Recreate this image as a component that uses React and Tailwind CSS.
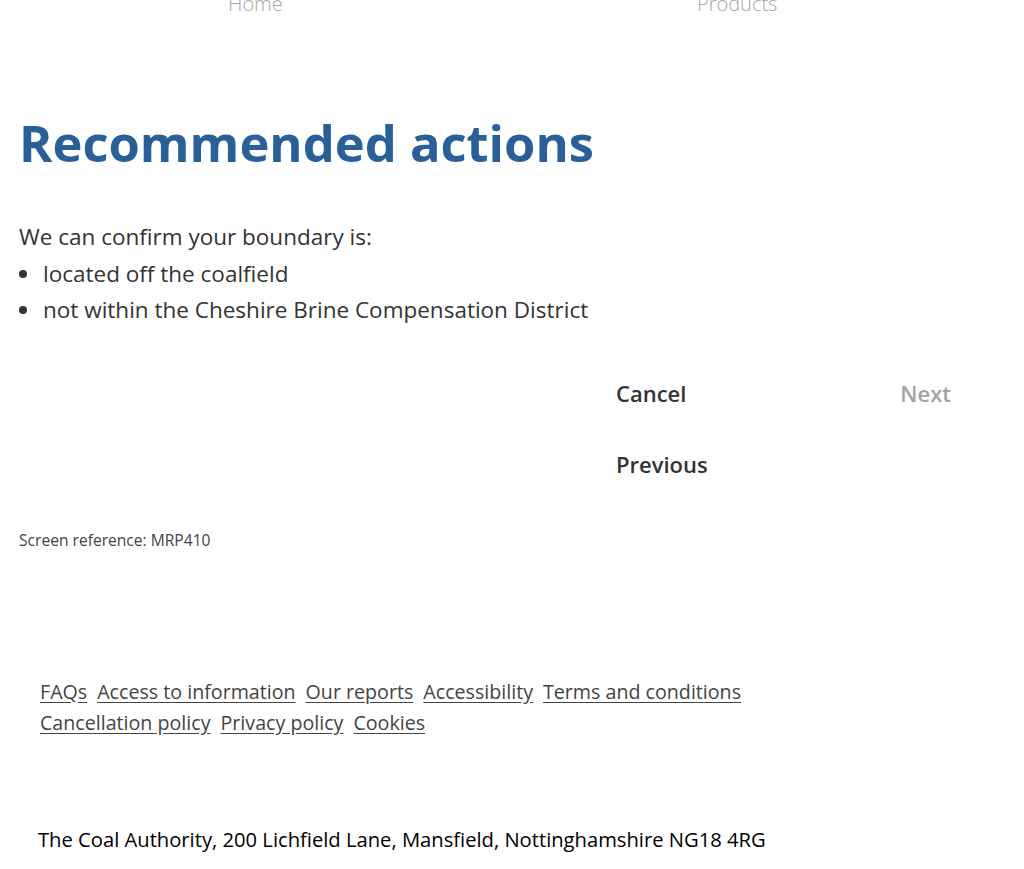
import React from 'react';

const footerLinks = [
  ['FAQs', 'Access to information', 'Our reports', 'Accessibility', 'Terms and conditions'],
  ['Cancellation policy', 'Privacy policy', 'Cookies'],
];

const boundaryPoints = ['located off the coalfield', 'not within the Cheshire Brine Compensation District'];

export default function App() {
  return (
    <div className="min-h-screen bg-white font-['Open_Sans',sans-serif] text-[#333] overflow-hidden">
      <nav className="h-[14px] relative">
        <a href="#" className="absolute left-[228px] top-[-10px] text-[20px] leading-[28px] font-light text-[#a6a6a6]">Home</a>
        <a href="#" className="absolute left-[697px] top-[-10px] text-[20px] leading-[28px] font-light text-[#a6a6a6]">Products</a>
      </nav>

      <main className="px-[19px]">
        <h1 className="mt-[99px] text-[50.7px] leading-[60px] font-bold text-[#2b5f97]">Recommended actions</h1>

        <div className="mt-[46px] text-[22.5px] leading-[36.5px]">
          <p>We can confirm your boundary is:</p>
          <ul>
            {boundaryPoints.map((point) => (
              <li key={point} className="flex items-center">
                <span className="w-[8px] h-[8px] ml-[0px] mr-[16px] rounded-full bg-[#333] shrink-0"></span>
                {point}
              </li>
            ))}
          </ul>
        </div>

        <div className="mt-[50px] ml-[597px] w-[335px]">
          <div className="flex justify-between items-center h-[30px]">
            <button className="text-[22px] font-semibold text-[#333]">Cancel</button>
            <button className="text-[22px] font-semibold text-[#a3a3a3]">Next</button>
          </div>
          <div className="mt-[41px] h-[30px] flex items-center">
            <button className="text-[22px] font-semibold text-[#333]">Previous</button>
          </div>
        </div>

        <p className="mt-[50px] text-[15.6px] leading-[20px] text-[#444]">Screen reference: MRP410</p>
      </main>

      <footer className="mt-[126px] px-[40px]">
        {footerLinks.map((row, i) => (
          <div key={i} className="flex gap-[10px] text-[19.65px] leading-[31px] text-[#444]">
            {row.map((label) => (
              <a key={label} href="#" className="underline underline-offset-[3px]">{label}</a>
            ))}
          </div>
        ))}
        <p className="mt-[87px] -ml-[2px] text-[20.2px] leading-[28px] text-black">
          The Coal Authority, 200 Lichfield Lane, Mansfield, Nottinghamshire NG18 4RG
        </p>
      </footer>
    </div>
  );
}
